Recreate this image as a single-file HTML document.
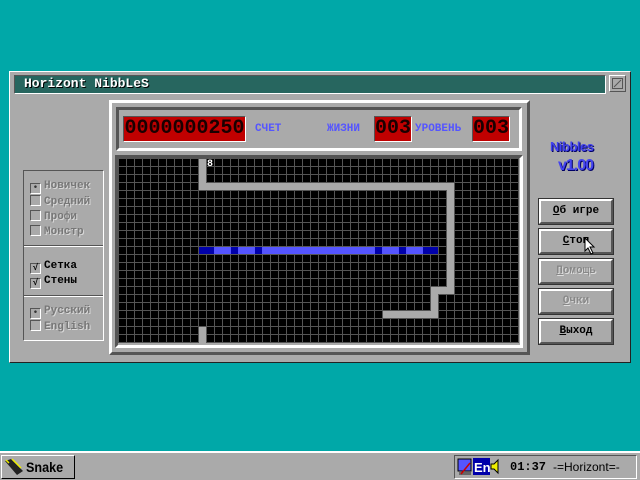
<!DOCTYPE html>
<html><head><meta charset="utf-8"><style>
*{margin:0;padding:0;box-sizing:border-box}
body{width:640px;height:480px;background:#00a8a8;position:relative;overflow:hidden;font-family:"Liberation Mono",monospace;font-weight:bold;font-size:11px}
.a{position:absolute}
.up{border-style:solid;border-width:2px;border-color:#fff #555 #555 #fff}
.dn{border-style:solid;border-width:2px;border-color:#555 #fff #fff #555}
.led{position:absolute;background:#c00000;border:1px solid;border-color:#555 #fff #fff #555;color:#1a0000;font-family:"Liberation Mono",monospace;font-weight:bold;font-size:20px;line-height:23px;text-align:center;overflow:hidden;letter-spacing:0;transform-origin:left top}
.lbl{position:absolute;color:#5555ff;font-size:11px}
.it{position:absolute;left:30px;height:12px;line-height:12px;color:#777;text-shadow:1px 1px 0 #d8d8d8;white-space:nowrap;font-size:11px}
.it i{display:inline-block;width:11px;height:11px;border:1px solid;border-color:#555 #fff #fff #555;vertical-align:-2px;margin-right:3px;font-style:normal;font-size:9px;line-height:9px;text-align:center;color:#333;text-shadow:none}
.btn{position:absolute;left:539px;width:74px;height:25px;background:#aaa;border:2px solid;border-color:#fff #555 #555 #fff;outline:1px solid #333;text-align:center;line-height:21px;color:#000}
.btn.d{color:#888;text-shadow:1px 1px 0 #ddd}
</style></head><body>
<div class="a" style="left:9px;top:71px;width:622px;height:292px;background:#aaa;border:1px solid;border-color:#fff #222 #222 #fff"></div>
<div class="a" style="left:14px;top:75px;width:592px;height:19px;background:#27665f;border:1px solid;border-color:#555 #fff #fff #555"></div>
<div class="a" style="left:24px;top:76px;color:#fff;font-size:13px;line-height:16px;text-shadow:1px 1px 0 #000">Horizont NibbLeS</div>
<div class="a" style="left:609px;top:75px;width:17px;height:17px;background:#aaa;border:1px solid;border-color:#fff #555 #555 #fff">
<svg width="15" height="15" style="position:absolute;left:0;top:0"><rect x="2.5" y="2.5" width="10" height="10" fill="none" stroke="#555"/><line x1="4" y1="11" x2="11" y2="4" stroke="#555"/></svg></div>
<div class="a up" style="left:109px;top:100px;width:421px;height:255px;border-width:3px"></div>
<div class="a dn" style="left:116px;top:107px;width:406px;height:44px;border-width:3px"></div>
<div class="led" style="left:123px;top:116px;width:123px;height:26px">0000000250</div>
<div class="lbl" style="left:255px;top:123px">СЧЕТ</div>
<div class="lbl" style="left:327px;top:123px">ЖИЗНИ</div>
<div class="led" style="left:374px;top:116px;width:38px;height:26px">003</div>
<div class="lbl" style="left:415px;top:123px">УРОВЕНЬ</div>
<div class="led" style="left:472px;top:116px;width:38px;height:26px">003</div>
<div class="a" style="left:115px;top:155px;width:408px;height:193px;border:3px solid;border-color:#555 #fff #fff #555"></div>
<svg class="a" style="left:118px;top:158px" width="401" height="185">
<defs><pattern id="g" width="8" height="8" patternUnits="userSpaceOnUse"><rect width="8" height="8" fill="#555"/><rect x="1" y="1" width="7" height="7" fill="#000"/></pattern></defs>
<rect width="401" height="185" fill="url(#g)"/>
<g fill="#aaa">
<rect x="81" y="1" width="7" height="31"/>
<rect x="81" y="25" width="255" height="7"/>
<rect x="329" y="25" width="7" height="111"/>
<rect x="313" y="129" width="23" height="7"/>
<rect x="313" y="129" width="7" height="31"/>
<rect x="265" y="153" width="55" height="7"/>
<rect x="81" y="169" width="7" height="16"/>
</g>
<rect x="81" y="89" width="239" height="7" fill="#5555ff"/>
<g fill="#0000aa"><rect x="81" y="89" width="15" height="7"/><rect x="113" y="89" width="7" height="7"/><rect x="137" y="89" width="7" height="7"/><rect x="257" y="89" width="7" height="7"/><rect x="281" y="89" width="7" height="7"/><rect x="305" y="89" width="15" height="7"/></g>
<text x="89" y="8" fill="#fff" font-family="Liberation Mono" font-weight="bold" font-size="10">8</text>
</svg>
<div class="a" style="left:23px;top:170px;width:81px;height:171px;border:1px solid;border-color:#555 #fff #fff #555"></div>
<div class="a" style="left:24px;top:245px;width:79px;height:2px;border-top:1px solid #555;border-bottom:1px solid #fff"></div>
<div class="a" style="left:24px;top:295px;width:79px;height:2px;border-top:1px solid #555;border-bottom:1px solid #fff"></div>
<div class="it" style="top:180px"><i>•</i>Новичек</div>
<div class="it" style="top:195px"><i></i>Средний</div>
<div class="it" style="top:210px"><i></i>Профи</div>
<div class="it" style="top:225px"><i></i>Монстр</div>
<div class="it" style="top:260px;color:#000;text-shadow:none"><i style="color:#000">√</i>Сетка</div>
<div class="it" style="top:275px;color:#000;text-shadow:none"><i style="color:#000">√</i>Стены</div>
<div class="it" style="top:305px"><i>•</i>Русский</div>
<div class="it" style="top:320px"><i></i>English</div>
<div class="a" style="left:550px;top:139px;color:#4444ee;font-family:'Liberation Sans',sans-serif;font-weight:bold;font-size:13px;text-shadow:1px 1px 0 #000066;letter-spacing:-0.5px">Nibbles</div>
<div class="a" style="left:558px;top:157px;color:#4444ee;font-family:'Liberation Sans',sans-serif;font-weight:bold;font-size:16px;text-shadow:1px 1px 0 #000066;letter-spacing:-1px">v1.00</div>
<div class="btn" style="top:199px"><u>О</u>б игре</div>
<div class="btn" style="top:229px"><u>С</u>топ</div>
<div class="btn d" style="top:259px"><u>П</u>омощь</div>
<div class="btn d" style="top:289px"><u>О</u>чки</div>
<div class="btn" style="top:319px"><u>В</u>ыход</div>
<svg class="a" style="left:584px;top:237px" width="12" height="18"><path d="M1 1 L1 14 L4 11 L7 17 L9 16 L6 10 L10 10 Z" fill="#fff" stroke="#000"/></svg>
<div class="a" style="left:0;top:451px;width:640px;height:29px;background:#aaa;border-top:2px solid #fff"></div>
<div class="a" style="left:1px;top:455px;width:74px;height:24px;border:1px solid;border-color:#fff #000 #000 #fff;background:#aaa"></div>
<svg class="a" style="left:3px;top:457px" width="22" height="20"><path d="M2 4 L8 2 L20 14 L14 18 Z" fill="#222"/><path d="M3 3 L6 6 M9 2 L18 11" stroke="#ee0" stroke-width="1.5"/></svg>
<div class="a" style="left:26px;top:457px;font-family:'Liberation Sans',sans-serif;font-size:14px;line-height:20px;color:#000;transform:scaleX(.9);transform-origin:left">Snake</div>
<div class="a" style="left:454px;top:455px;width:183px;height:24px;border:1px solid;border-color:#555 #fff #fff #555"></div>
<svg class="a" style="left:457px;top:458px" width="48" height="18"><rect x="1" y="1" width="13" height="12" fill="#5555ff" stroke="#000"/><rect x="2" y="14" width="12" height="3" fill="#666"/><path d="M4 16 L13 5" stroke="#c00" stroke-width="1.5"/><rect x="16" y="0" width="17" height="17" fill="#0000aa"/><text x="17" y="14" fill="#fff" font-family="Liberation Sans" font-size="13">En</text><path d="M34 6 L37 6 L41 2 L41 15 L37 11 L34 11 Z" fill="#ee0" stroke="#000"/></svg>
<div class="a" style="left:510px;top:459px;font-size:12px;line-height:16px;color:#000">01:37</div>
<div class="a" style="left:553px;top:459px;font-family:'Liberation Sans',sans-serif;font-weight:normal;font-size:12px;line-height:16px;color:#000">-=Horizont=-</div>
</body></html>
